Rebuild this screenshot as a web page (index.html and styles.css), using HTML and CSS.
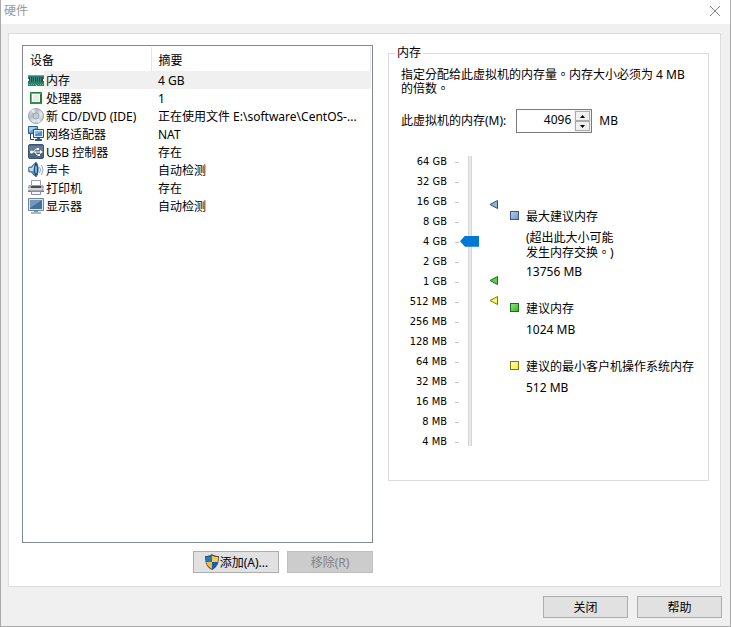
FILE: index.html
```
<!DOCTYPE html>
<html lang="zh-CN">
<head>
    <meta charset="UTF-8">
    <meta name="viewport" content="width=device-width, initial-scale=1.0">
    <title>硬件</title>
    <link rel="stylesheet" href="styles.css">
</head>
<body>

<div class="window">
    <header class="titlebar">
        <h1>硬件</h1>
        <button class="close" type="button" aria-label="关闭窗口">
            <svg width="12" height="12" viewBox="0 0 12 12"><path d="M1 1l10 10M11 1L1 11" stroke="#888" fill="none"/></svg>
        </button>
    </header>

    <main class="panel">
        <section class="devices">
            <div class="list">
                <table>
                    <thead>
                        <tr><th class="col-device">设备</th><th>摘要</th></tr>
                    </thead>
                    <tbody>
                        <tr class="selected">
                            <td><div class="device">
                                <svg width="16" height="16" viewBox="0 0 16 16">
                                    <path d="M0 3h16v4h-1v2h1v5H9v-1H8v1H0V9h1V7H0z" fill="#24876a"/>
                                    <path d="M0 3h16v1H0z" fill="#55b895"/>
                                    <path d="M1 5h3v5H1zM5 5h3v5H5zM9 5h3v5H9zM13 5h2v5h-2z" fill="#32475f"/>
                                    <path d="M2 5h1v5H2zM6 5h1v5H6zM10 5h1v5h-1z" fill="#597b90"/>
                                    <path d="M1 12h1v1H1zM3 12h1v1H3zM5 12h1v1H5zM7 12h1v1H7zM10 12h1v1h-1zM12 12h1v1h-1zM14 12h1v1h-1z" fill="#6dbb8c"/>
                                </svg>
                                <span>内存</span>
                            </div></td>
                            <td>4 GB</td>
                        </tr>
                        <tr>
                            <td><div class="device">
                                <svg width="16" height="16" viewBox="0 0 16 16">
                                    <rect x="2" y="2" width="12" height="12" rx="1" fill="#1f7c38"/>
                                    <path d="M3 3h10v1H4v9H3z" fill="#5fbd68"/>
                                    <rect x="4" y="4" width="8" height="8" fill="#fff"/>
                                    <path d="M5 5h6v6H5z" fill="#e6ece6"/>
                                    <path d="M2 13l2-1h8l2 1v1H2z" fill="#2b943f"/>
                                </svg>
                                <span>处理器</span>
                            </div></td>
                            <td>1</td>
                        </tr>
                        <tr>
                            <td><div class="device">
                                <svg width="16" height="16" viewBox="0 0 16 16">
                                    <defs>
                                        <linearGradient id="disc" x1="0" y1="0" x2="1" y2="1">
                                            <stop offset="0" stop-color="#f3f4f5"/>
                                            <stop offset=".35" stop-color="#b4bdc7"/>
                                            <stop offset=".6" stop-color="#e7eaed"/>
                                            <stop offset="1" stop-color="#a3adb9"/>
                                        </linearGradient>
                                    </defs>
                                    <circle cx="8" cy="8" r="7.5" fill="url(#disc)" stroke="#9aa5b1"/>
                                    <path d="M8 8L3 2l3-1zM8 8l5 6-3 1z" fill="#fff" opacity=".6"/>
                                    <circle cx="8" cy="8" r="3" fill="#d8e0e8" stroke="#8d9bab"/>
                                    <circle cx="8" cy="8" r="1.2" fill="#fff" stroke="#8492a3" stroke-width=".7"/>
                                </svg>
                                <span>新 CD/DVD (IDE)</span>
                            </div></td>
                            <td>正在使用文件 E:\software\CentOS-...</td>
                        </tr>
                        <tr>
                            <td><div class="device">
                                <svg width="16" height="16" viewBox="0 0 16 16">
                                    <path d="M.5 .5h9v7h-9z" fill="#5f9dce" stroke="#255e91"/>
                                    <path d="M1 1h8L1 6z" fill="#a7cde8"/>
                                    <path d="M2.500 8v5.500H6" fill="none" stroke="#24445e"/>
                                    <path d="M5.500 3.500h10v8h-10z" fill="#d8eaf7" stroke="#1e5488"/>
                                    <path d="M7 5h7v5H7z" fill="#4e8fc5"/>
                                    <path d="M7 5h7l-7 4z" fill="#88b9df"/>
                                    <path d="M9 12h3v1h2v2H7v-2h2z" fill="#2b5f8f"/>
                                </svg>
                                <span>网络适配器</span>
                            </div></td>
                            <td>NAT</td>
                        </tr>
                        <tr>
                            <td><div class="device">
                                <svg width="16" height="16" viewBox="0 0 16 16">
                                    <rect x=".5" y=".5" width="15" height="14" rx="1.500" fill="#4c6783" stroke="#3c5571"/>
                                    <path d="M1 2h14v5H1z" fill="#637d98"/>
                                    <path d="M3 8h10M5 8l3-3h2M7 8l2 3h2" fill="none" stroke="#fff"/>
                                    <circle cx="3.500" cy="8" r="1.500" fill="#fff"/>
                                    <path d="M12 6l3 2-3 2zM9 4h2v2H9zM10 10h2v2h-2z" fill="#fff"/>
                                </svg>
                                <span>USB 控制器</span>
                            </div></td>
                            <td>存在</td>
                        </tr>
                        <tr>
                            <td><div class="device">
                                <svg width="16" height="16" viewBox="0 0 16 16">
                                    <path d="M1 5h2l5-5c3 3 3 12 0 15l-5-5H1C0 9 0 6 1 5z" fill="#5b90bf" stroke="#2f5c88" stroke-width=".7"/>
                                    <path d="M1 6h3l3-4-2 7H2z" fill="#c5def0"/>
                                    <ellipse cx="8" cy="7.500" rx="2" ry="6.500" fill="#1d4a76"/>
                                    <ellipse cx="8" cy="7.500" rx="1" ry="4" fill="#83b2d8"/>
                                    <path d="M11.500 5q2 3 0 6M13.500 3q3 5 0 10" fill="none" stroke="#80a9cc"/>
                                </svg>
                                <span>声卡</span>
                            </div></td>
                            <td>自动检测</td>
                        </tr>
                        <tr>
                            <td><div class="device">
                                <svg width="16" height="16" viewBox="0 0 16 16">
                                    <path d="M3.500 .5h9v5h-9z" fill="#fff" stroke="#9b9da4"/>
                                    <path d="M1 5h2v2h10V5h2l1 2v5H0V7z" fill="#a9a9b5"/>
                                    <path d="M3 6h10v2H3z" fill="#494b57"/>
                                    <path d="M0 8h16v2H0z" fill="#d6d5dc"/>
                                    <path d="M0 11h16v1H0z" fill="#777783"/>
                                    <path d="M3.500 11.500h9v3h-9z" fill="#f5f6fa" stroke="#8c8d98"/>
                                    <path d="M14 9h1v1h-1z" fill="#25d366"/>
                                </svg>
                                <span>打印机</span>
                            </div></td>
                            <td>存在</td>
                        </tr>
                        <tr>
                            <td><div class="device">
                                <svg width="16" height="16" viewBox="0 0 16 16">
                                    <path d="M.5 .5h15v12H.5z" fill="#d9e4ec" stroke="#6e879e"/>
                                    <path d="M2 2h12v9H2z" fill="#45729c"/>
                                    <path d="M2 2h12L2 10z" fill="#7398b8"/>
                                    <path d="M6 13h4v1H6z" fill="#8496a6"/>
                                    <path d="M3 14h10v2H3z" fill="#a9b8c5"/>
                                </svg>
                                <span>显示器</span>
                            </div></td>
                            <td>自动检测</td>
                        </tr>
                    </tbody>
                </table>
            </div>
            <div class="list-actions">
                <button class="btn" type="button">
                    <svg width="16" height="16" viewBox="0 0 16 16">
                        <path d="M8 0c2 1.500 4 2 7 2 0 6-1 11-7 14C2 13 1 8 1 2c3 0 5-.5 7-2z" fill="#4b4f55"/>
                        <path d="M8 1.500V8H2.300C2 6 2 5 2 3c2.500 0 4-.5 6-1.500z" fill="#1979d2"/>
                        <path d="M8 1.500C10 2.500 11.500 3 14 3c0 2 0 3-.3 5H8z" fill="#ffc83d"/>
                        <path d="M2.300 8H8v6.800C4.500 13 2.800 11 2.300 8z" fill="#ffb92a"/>
                        <path d="M8 8h5.700c-.5 3-2.200 5-5.700 6.800z" fill="#0b61bd"/>
                    </svg>添加(A)...
                </button>
                <button class="btn" type="button" disabled>移除(R)</button>
            </div>
        </section>

        <fieldset class="memory">
            <legend>内存</legend>
            <p class="hint" lang="zh-TW">指定分配给此虚拟机的内存量。内存大小必须为 4 MB 的倍数。</p>
            <div class="amount">
                <label for="memory-size">此虚拟机的内存(M):</label>
                <div class="spinner">
                    <input type="text" id="memory-size" value="4096">
                    <div class="spin-buttons">
                        <button type="button" aria-label="增加"><svg width="5" height="3" viewBox="0 0 5 3"><path d="M0 3L2.500 0 5 3z"/></svg></button>
                        <button type="button" aria-label="减少"><svg width="5" height="3" viewBox="0 0 5 3"><path d="M0 0h5L2.500 3z"/></svg></button>
                    </div>
                </div>
                <span>MB</span>
            </div>

            <div class="scale">
                <ul class="ticks">
                    <li>64 GB</li>
                    <li>32 GB</li>
                    <li>16 GB</li>
                    <li>8 GB</li>
                    <li>4 GB</li>
                    <li>2 GB</li>
                    <li>1 GB</li>
                    <li>512 MB</li>
                    <li>256 MB</li>
                    <li>128 MB</li>
                    <li>64 MB</li>
                    <li>32 MB</li>
                    <li>16 MB</li>
                    <li>8 MB</li>
                    <li>4 MB</li>
                </ul>
                <input class="slider" type="range" min="0" max="14" value="10" aria-label="内存大小">
                <svg class="markers" width="10" height="290" viewBox="0 0 10 290">
                    <path d="M1 48.500L8.500 44.500v8z" fill="#8fb3dd" stroke="#2f4f7c"/>
                    <path d="M1 124.500L8.500 120.500v8z" fill="#5fd04a" stroke="#14701a"/>
                    <path d="M1 144.500L8.500 140.500v8z" fill="#fdf55a" stroke="#7d7710"/>
                </svg>
                <div class="legend">
                    <div class="legend-item">
                        <i class="swatch blue"></i>
                        <div>
                            <p>最大建议内存</p>
                            <p class="note" lang="zh-TW">(超出此大小可能<br>发生内存交换。)</p>
                            <p>13756 MB</p>
                        </div>
                    </div>
                    <div class="legend-item">
                        <i class="swatch green"></i>
                        <div>
                            <p>建议内存</p>
                            <p>1024 MB</p>
                        </div>
                    </div>
                    <div class="legend-item">
                        <i class="swatch yellow"></i>
                        <div>
                            <p>建议的最小客户机操作系统内存</p>
                            <p>512 MB</p>
                        </div>
                    </div>
                </div>
            </div>
        </fieldset>
    </main>

    <footer class="actions">
        <button class="btn" type="button">关闭</button>
        <button class="btn" type="button">帮助</button>
    </footer>
</div>

</body>
</html>
```
FILE: styles.css
```
* {
    box-sizing: border-box;
}
body {
    margin: 0;
    font-family: "Noto Sans", "Noto Sans CJK TC", sans-serif;
    font-size: 12px;
    line-height: 18px;
    color: #000;
}
button, input {
    font: inherit;
    color: inherit;
}
svg {
    display: block;
    flex: none;
}
p {
    margin: 0;
}
.window {
    display: flex;
    flex-direction: column;
    min-height: 100vh;
    background-color: #f0f0f0;
    border: 1px solid #aaa;
    border-top: none;
}
.titlebar {
    display: flex;
    justify-content: space-between;
    align-items: center;
    height: 24px;
    padding: 0 9px 2px 3px;
    background-color: white;
}
h1 {
    margin: 0;
    font-size: 12px;
    font-weight: normal;
    color: #999;
}
.close {
    padding: 0;
    border: none;
    background: none;
}
.panel {
    flex: 1;
    display: grid;
    grid-template-columns: 351fr 321fr;
    gap: 15px;
    margin: 9px 9px 0 7px;
    padding: 11px 11px 13px 13px;
    background-color: white;
    border: 1px solid #dcdcdc;
}

/* device list */
.devices {
    display: flex;
    flex-direction: column;
}
.list {
    flex: 1;
    padding: 1px 1px 0 5px;
    border: 1px solid #828790;
}
table {
    width: 100%;
    table-layout: fixed;
    border-collapse: collapse;
}
th, td {
    height: 18px;
    padding: 0 0 0 7px;
    text-align: left;
    font-weight: normal;
    white-space: nowrap;
}
th {
    height: 24px;
    padding-top: 4px;
    border-right: 1px solid #e5e5e5;
}
.col-device {
    width: 123px;
    padding-left: 2px;
}
td {
    padding-top: 2px;
    line-height: 16px;
}
td:first-child {
    padding: 0;
}
.device {
    display: flex;
    align-items: center;
}
.device span {
    flex: 1;
    padding: 2px 0 0 2px;
}
.selected span, .selected td:last-child {
    background-color: #f0f0f0;
}
.list-actions {
    display: flex;
    justify-content: flex-end;
    gap: 8px;
    margin-top: 8px;
}
.btn {
    display: flex;
    justify-content: center;
    align-items: center;
    width: 86px;
    height: 22px;
    padding: 2px 0 0;
    background-color: #e1e1e1;
    border: 1px solid #adadad;
}
.btn svg {
    margin-top: -2px;
}
.btn:disabled {
    background-color: #ccc;
    border-color: #bfbfbf;
    color: #838383;
}

/* memory settings */
.memory {
    align-self: start;
    min-width: 0;
    margin: 0;
    padding: 7px 10px 28px 12px;
    border: 1px solid #dcdcdc;
}
legend {
    margin-left: -6px;
    padding: 0 2px;
    line-height: 16px;
}
.hint {
    line-height: 14px;
}
.amount {
    display: flex;
    align-items: center;
    gap: 7px;
    margin-top: 13px;
}
.amount label {
    padding-right: 3px;
}
.spinner {
    display: flex;
    width: 76px;
    height: 24px;
    border: 1px solid #7a7a7a;
}
.spinner input {
    flex: 1;
    min-width: 0;
    padding: 0 3px 2px 0;
    border: none;
    text-align: right;
}
.spin-buttons {
    display: flex;
    flex-direction: column;
    width: 17px;
    padding: 1px;
    background-color: #f0f0f0;
}
.spin-buttons button {
    flex: 1;
    display: flex;
    justify-content: center;
    align-items: center;
    padding: 0;
    background-color: #f0f0f0;
    border: 1px solid #acacac;
}
.scale {
    display: flex;
    margin-top: 23px;
}
.ticks {
    width: 58px;
    margin: -4px 0 0;
    padding: 0;
    list-style: none;
    font-family: "DejaVu Sans Condensed", sans-serif;
    font-size: 11px;
    line-height: 20px;
}
.ticks li {
    display: flex;
    justify-content: flex-end;
    align-items: center;
    gap: 8px;
    white-space: nowrap;
}
.ticks li::after {
    content: "";
    width: 4px;
    height: 1px;
    background-color: #c4c4c4;
}
.slider {
    appearance: none;
    writing-mode: vertical-lr;
    direction: rtl;
    width: 19px;
    height: 290px;
    margin: 0 0 0 1px;
    background: linear-gradient(90deg, #d6d6d6 1px, #e7eaea 1px 3px, #d6d6d6 3px) center / 4px 100% no-repeat;
}
.slider::-webkit-slider-thumb {
    appearance: none;
    width: 19px;
    height: 11px;
    background-color: #0078d7;
    clip-path: polygon(0 50%, 26% 0, 100% 0, 100% 100%, 26% 100%);
}
.markers {
    margin-left: 10px;
}
.legend {
    display: flex;
    flex-direction: column;
    gap: 19px;
    padding: 52px 0 0 11px;
}
.legend-item {
    display: flex;
    gap: 7px;
}
.legend-item p + p {
    margin-top: 3px;
}
.legend-item p + .note {
    margin-top: 4px;
    line-height: 15px;
}
.swatch {
    flex: none;
    width: 9px;
    height: 9px;
    margin-top: 3px;
    border: 1px solid;
}
.blue {
    border-color: #38588a;
    background: linear-gradient(135deg, #b4cdec, #7299cb);
}
.green {
    border-color: #14701a;
    background: linear-gradient(135deg, #8ce67b, #3bb52b);
}
.yellow {
    border-color: #80790f;
    background: linear-gradient(135deg, #fffbb0, #f8ee42);
}

/* dialog buttons */
.actions {
    display: flex;
    justify-content: flex-end;
    gap: 9px;
    padding: 9px 8px 8px;
}
.actions .btn {
    width: 85px;
}
```
